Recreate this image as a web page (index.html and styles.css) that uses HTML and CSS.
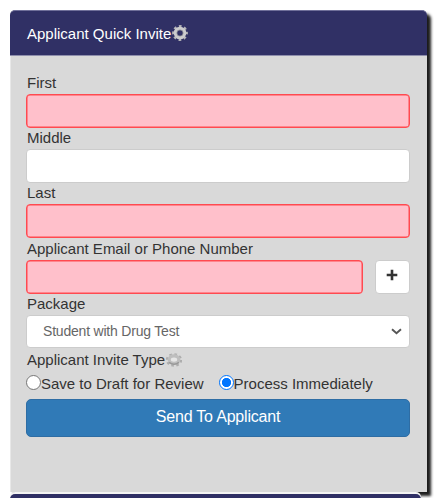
FILE: index.html
```
<!DOCTYPE html>
<html lang="en">
<head>
    <meta charset="UTF-8">
    <meta name="viewport" content="width=device-width, initial-scale=1.0">
    <title>Applicant Quick Invite</title>
    <link rel="stylesheet" href="styles.css">
</head>
<body>
    <div class="panel">
        <div class="panel-heading">
            <span>Applicant Quick Invite</span>
            <svg class="gear" viewBox="0 0 16 16">
                <circle cx="8" cy="8" r="6.7" fill="none" stroke="#b4b4b8" stroke-width="2.4" stroke-dasharray="2.7 2.562" stroke-dashoffset="1.35"/>
                <circle cx="8" cy="8" r="4.7" fill="none" stroke="#cbcbcd" stroke-width="3.2"/>
                <circle cx="8" cy="8" r="3.1" fill="none" stroke="#8e8e96" stroke-width="0.8"/>
            </svg>
        </div>
        <form class="panel-body">
            <label for="first">First</label>
            <input type="text" id="first" class="form-control required">
            <label for="middle">Middle</label>
            <input type="text" id="middle" class="form-control">
            <label for="last">Last</label>
            <input type="text" id="last" class="form-control required">
            <label for="email">Applicant Email or Phone Number</label>
            <div class="email-row">
                <input type="text" id="email" class="form-control required">
                <button type="button" class="btn-add" aria-label="Add">
                    <svg width="12" height="12" viewBox="0 0 12 12"><path d="M6 .7v10.6M.7 6h10.6" stroke="#333" stroke-width="2.6"/></svg>
                </button>
            </div>
            <label for="package">Package</label>
            <div class="form-control select" id="package">
                <span>Student with Drug Test</span>
                <svg width="11" height="7" viewBox="0 0 11 7"><path d="M1 1.2 5.5 5.2 10 1.2" fill="none" stroke="#555" stroke-width="1.9"/></svg>
            </div>
            <div class="type-label">
                <span>Applicant Invite Type</span>
                <svg class="gear" viewBox="0 0 16 16">
                    <ellipse cx="8" cy="9" rx="7" ry="5.6" fill="none" stroke="#adadad" stroke-width="2.4" stroke-dasharray="2.5 2.47"/>
                    <ellipse cx="8" cy="8.6" rx="4.8" ry="3.8" fill="#e6e6e6" stroke="#bebebe" stroke-width="3.2"/>
                    <path d="M3 11.4Q8 15.2 13 11.4" fill="none" stroke="#999" stroke-width="1.5"/>
                </svg>
            </div>
            <div class="radios">
                <span class="radio"></span><span class="radio-text">Save to Draft for Review</span>
                <span class="radio checked"></span><span>Process Immediately</span>
            </div>
            <button type="button" class="btn-send">Send To Applicant</button>
        </form>
    </div>
    <div class="panel-next"></div>
</body>
</html>
```

FILE: styles.css
```
* {
    box-sizing: border-box;
}
body {
    margin: 0;
    padding: 10px 10px 0;
    height: 498px;
    overflow: hidden;
    background-color: #fff;
    color: #333;
    font-family: "Liberation Sans", Arial, sans-serif;
    font-size: 15px;
}
.panel {
    width: 417px;
    height: 482px;
    border-left: 1px solid #e8e8e8;
    border-radius: 5px 5px 0 0;
    background-color: #d9d9d9;
    box-shadow: 4px 4px 3px #1c1c1c;
}
.panel-heading {
    display: flex;
    align-items: center;
    height: 46px;
    margin-left: -1px;
    padding: 0 17px;
    border-top: 1px solid #70709a;
    border-bottom: 1px solid #8e8eac;
    border-radius: 5px 5px 0 0;
    background-color: #303065;
    color: #fff;
}
.gear {
    width: 16px;
    height: 16px;
    margin-left: 1px;
}
.panel-body {
    padding: 18px 17px 0 15px;
}
label {
    display: block;
    height: 20px;
    padding-left: 1px;
    line-height: 17px;
}
.form-control {
    display: block;
    width: 384px;
    height: 34px;
    margin-bottom: 1.2px;
    border: 1px solid #ccc;
    border-radius: 4px;
    background-color: #fff;
}
.form-control.required {
    border-color: #ff4a50;
    background-color: #ffc0cb;
    box-shadow: inset 0 0 0 0.5px #ff4a50;
}
.email-row {
    display: flex;
    justify-content: space-between;
}
.email-row .form-control {
    width: 337px;
}
.btn-add {
    display: flex;
    align-items: center;
    justify-content: center;
    width: 35px;
    height: 34px;
    padding: 0 1px 3px 0;
    border: 1px solid #ccc;
    border-radius: 4px;
    background-color: #fff;
}
.select {
    display: flex;
    align-items: center;
    justify-content: space-between;
    height: 33px;
    margin-bottom: 2.2px;
    padding: 0 7px 0 16px;
    color: #666;
    font-size: 14px;
    letter-spacing: -0.2px;
}
.type-label {
    display: flex;
    align-items: center;
    height: 20px;
    padding: 0 0 1px 1px;
}
.radios {
    display: flex;
    align-items: center;
    height: 29px;
    padding-bottom: 1px;
}
.radio {
    flex: none;
    width: 15px;
    height: 15px;
    margin-bottom: 2px;
    border: 1px solid #767676;
    border-radius: 50%;
    background-color: #fff;
}
.radio-text {
    margin-right: 15px;
}
.radio.checked {
    border-color: #0075ff;
    background: radial-gradient(circle, #0075ff 4.3px, #fff 4.9px);
}
.btn-send {
    display: block;
    width: 384px;
    height: 38px;
    padding: 0 0 1px;
    border: 1px solid #2e6da4;
    border-radius: 5px;
    background-color: #307ab7;
    color: #fff;
    font-family: inherit;
    font-size: 16px;
    letter-spacing: -0.2px;
}
/* top edge of the panel that follows */
.panel-next {
    width: 411px;
    height: 20px;
    margin-top: 2px;
    border-radius: 5px 5px 0 0;
    background-color: #303065;
    box-shadow: 0 -2px 0 #f4f4f4;
}
```
